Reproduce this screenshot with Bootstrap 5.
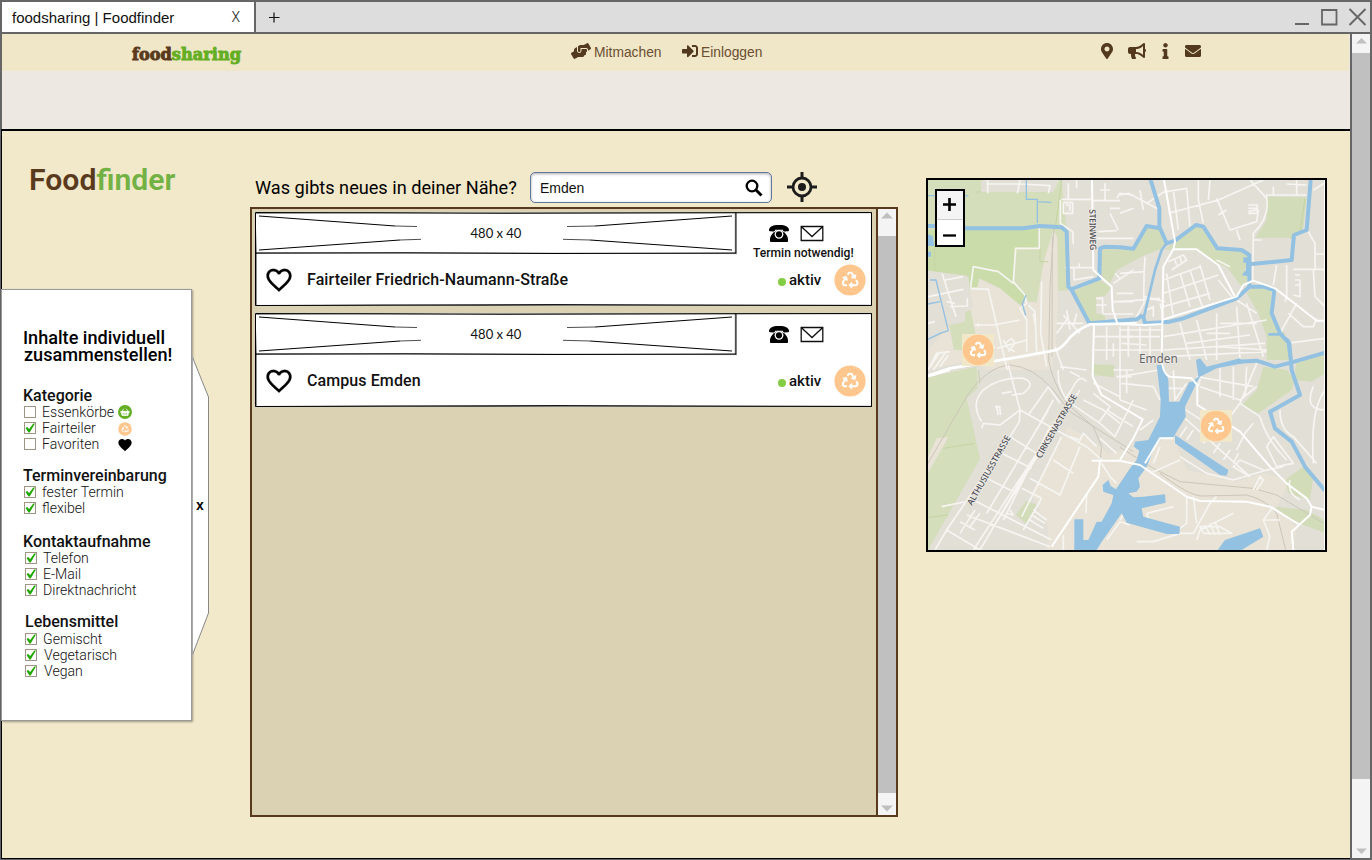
<!DOCTYPE html>
<html lang="de">
<head>
<meta charset="utf-8">
<title>foodsharing | Foodfinder</title>
<link rel="stylesheet" href="https://cdn.jsdelivr.net/npm/bootstrap@5.3.0/dist/css/bootstrap.min.css">
<style>
body{margin:0;font-family:Roboto,"Liberation Sans",sans-serif;color:#111;overflow:hidden;background:#f2e8ca}
svg{display:block;flex:none}
.window{width:1372px;height:860px;border:2px solid #666}
.tabstrip{height:32px;background:#ddd;border-bottom:2px solid #666;font:15px/30px "Liberation Sans",sans-serif}
.tab{width:254px;background:#fff;border-right:2px solid #666;padding:1px 14px 0 10px}
.tab .tab-x{font:300 14px/29px Roboto,sans-serif}
.plus{margin-left:8px}
.page{width:1348px}
.topnav{height:37px;background:#f0e6c8;font:13.8px/37px "Liberation Sans",sans-serif;color:#6b4f30;border-right:1px solid #ece8e1}
.band{height:58px;background:#ede9e2}
.content{border:solid #000;border-width:2px 0 1px 1px;margin:0 0 -1px -1px;background:#f2e8ca;z-index:1}
.vbar{width:20px;border-left:2px solid #666;background:#f4f4f4}
.thumb{background:#c0c0c0}
.leftcol{width:248px;padding-top:31px}
.brand-title{font-size:30.2px;line-height:36px;font-weight:600;color:#5a3a1c;padding-left:27px;margin:0}
.brand-title span{color:#72b244}
.filters{width:191px;height:432px;margin:91px 0 0 -1px;background:#fff;border:1px solid #999;box-shadow:1px 1px 2px rgba(0,0,0,.35);padding:39px 0 0 21px}
.filters h2{font-size:18.1px;line-height:17px;font-weight:500;margin:0 0 25px;color:#000;white-space:nowrap}
.filters h2 span{display:block;height:17px}
.filters h3{font-size:16px;line-height:16px;font-weight:500;margin:0;color:#111}
.opt{height:16px;line-height:16px;font-size:14.1px;font-weight:300;color:#111}
.tick{width:12px;height:12px;border:1px solid #a09484;background:#fff;margin-right:6px;margin-left:1px}
.inset1{padding-left:1px}
.midcol{width:648px;padding-top:41px}
.searchrow{height:31px;margin-bottom:4px}
.searchlabel{font-size:18.15px;width:280px;padding-left:5px;line-height:31px;color:#000}
.searchbox{width:242px;border:1px solid #5f78a0;border-radius:5px;background:#fff;box-shadow:inset 0 1px 3px #aaa;font:14px/30px "Liberation Sans",sans-serif;padding:0 8px 0 9px}
.listbox{height:610px;border:2px solid #5a3a1c;background:#dbd2b4}
.items{width:624px;padding:3px 0 0 3px;gap:7px}
.item{width:617px;height:94px;background:#fff}
.ph{width:482px;height:42px;font:13px/43px Lato,sans-serif;text-align:center}
.contact{padding:13px 0 0 16px}
.contact-icons{padding-left:16px;gap:11px}
.termin{font-size:12.1px;line-height:14px;font-weight:500;margin-top:4px}
.lower{height:52px;padding-left:9px}
.lower .ttl{width:484px;flex:none;padding-left:13px;font-size:16px;letter-spacing:.09px;line-height:20px;font-weight:500;color:#111}
.dot{width:8px;height:8px;flex:none;border-radius:50%;background:#84cc44;margin:4px 3px 0 0}
.akt{width:45px;flex:none;font-size:15px;font-weight:500;color:#111}
.listbar{width:20px;border-left:2px solid #5a3a1c;background:#f4f4f4}
.mapbox{width:401px;height:374px;border:2px solid #000;margin:47px 0 0 28px;overflow:hidden}
.zoomer{left:7px;top:9px;width:30px;height:58px;border:2px solid #000;background:#fff}
.zoomer div{height:26px}
.zoomer div:first-child{background:#f4f4f4;height:29px;border-bottom:1px solid #ccc}
</style>
</head>
<body>
<svg width="0" height="0" style="position:absolute">
<defs>
<symbol id="recycle" viewBox="0 0 512 512"><path d="M184.561 261.903c3.232 13.997-12.123 24.635-24.068 17.168l-40.736-25.455-50.867 81.402C55.606 356.273 70.96 384 96.012 384H148c6.627 0 12 5.373 12 12v40c0 6.627-5.373 12-12 12H96.115c-75.334 0-121.302-83.048-81.408-146.88l50.822-81.388-40.725-25.448c-12.081-7.547-8.966-25.961 4.879-29.158l110.237-25.45c8.611-1.988 17.201 3.381 19.189 11.99l25.452 110.237zm98.561-182.915l41.289 66.076-40.74 25.457c-12.051 7.528-9 25.953 4.879 29.158l110.237 25.45c8.672 1.999 17.215-3.438 19.189-11.99l25.45-110.237c3.197-13.844-11.99-24.719-24.068-17.168l-40.687 25.424-41.263-66.082c-37.521-60.033-125.209-60.171-162.816 0l-17.963 28.766c-3.51 5.62-1.8 13.021 3.82 16.533l33.919 21.195c5.62 3.512 13.024 1.803 16.536-3.817l17.961-28.743c12.712-20.341 41.973-19.676 54.257-.022zM497.288 301.12l-27.515-44.065c-3.511-5.623-10.916-7.334-16.538-3.821l-33.861 21.159c-5.62 3.512-7.33 10.915-3.818 16.536l27.564 44.112c13.257 21.211-2.057 48.96-27.136 48.96H320V336.02c0-14.213-17.242-21.383-27.313-11.313l-80 79.981c-6.249 6.248-6.249 16.379 0 22.627l80 79.989C302.689 517.308 320 510.3 320 495.989V448h95.88c75.274 0 121.335-82.997 81.408-146.88z" fill="#fff"/></symbol>
<symbol id="fair" viewBox="0 0 32 32"><circle cx="16" cy="16" r="15.6" fill="#ffc68d"/><use href="#recycle" x="7.7" y="7.4" width="17" height="17"/></symbol>
<symbol id="heart" viewBox="0 0 24 24"><path d="M12 21.35l-1.45-1.32C5.4 15.36 2 12.28 2 8.500 2 5.420 4.420 3 7.500 3c1.740 0 3.410.810 4.500 2.090C13.090 3.810 14.760 3 16.500 3 19.580 3 22 5.420 22 8.500c0 3.780-3.400 6.860-8.550 11.540L12 21.350z"/></symbol>
<symbol id="heart-o" viewBox="0 0 24 24"><path d="M16.500 3c-1.740 0-3.410.810-4.500 2.090C10.910 3.810 9.240 3 7.500 3 4.420 3 2 5.420 2 8.500c0 3.780 3.400 6.860 8.550 11.540L12 21.350l1.450-1.320C18.600 15.360 22 12.280 22 8.500 22 5.420 19.580 3 16.500 3zm-4.400 15.550l-.100.100-.100-.100C7.140 14.240 4 11.390 4 8.500 4 6.500 5.500 5 7.500 5c1.540 0 3.040.990 3.570 2.360h1.870C13.460 5.990 14.960 5 16.500 5c2 0 3.500 1.500 3.500 3.500 0 2.890-3.140 5.740-7.900 10.050z" stroke="#111" stroke-width=".2"/></symbol>
<symbol id="phone" viewBox="0 0 20 17"><path d="M1 6.300C-.3 6-.2 4.500.5 3.300 2.500.2 6 0 10 0s7.500.2 9.500 3.300c.7 1.200.8 2.700-.5 3l-3.700.2c-1 0-1.300-.6-1.300-1.700H6c0 1.100-.3 1.700-1.300 1.700zM4.700 7.200c1.300 0 1.900-.6 2.100-1.500h6.400c.2.900.8 1.500 2.100 1.500C17.500 9.500 19 12 19 14v1.800c0 .8-.3 1.200-1.200 1.200H2.200C1.300 17 1 16.600 1 15.800V14c0-2 1.500-4.500 3.700-6.800z" fill="#000"/><circle cx="10" cy="9.300" r="4.400" fill="#fff"/><circle cx="10" cy="9.300" r="3.100" fill="#000"/></symbol>
<symbol id="mail-o" viewBox="0 0 24 17"><path d="M1.200 1.500h21.600v14H1.200zM1.200 1.500 12 11.500 22.800 1.500" fill="none" stroke="#111" stroke-width="1.300"/></symbol>
<symbol id="check" viewBox="0 0 10 10"><path d="M.5 5 2.200 4 4.200 6.100 8.300.4H10L4.700 9.600H3.500z" fill="#22a800"/></symbol>
<symbol id="sketch" viewBox="0 0 617 94"><g fill="none" stroke="#000" stroke-width="1">
<path d="M.5.500 250 1.300 616.500.500V93.500L300 92.600.500 93.500z"/><path d="M.5 1.300 200 0 617 .700M1.300 93V40L0 1" opacity=".55"/><path d="M0 93.800 130 93.200 320 93.800 617 93.300" opacity=".6"/>
<path d="M.5 41.200 150 40.800 300 41.500 481 41V1"/><path d="M480.300 0V41.500M.500 40.700 482 41.600" opacity=".5"/></g>
<g fill="none" stroke="#000"><path d="M4 4 140 14 M4 38 145 28M477 4 340 14M477 38 335 28"/><path d="M140 14 162 14.500M145 28 166 27.300M340 14 312 14.500M335 28 308 27.300" stroke-width=".7"/></g></symbol>
</defs></svg>

<div class="window d-flex flex-column">
 <div class="tabstrip d-flex align-items-stretch">
  <div class="tab d-flex justify-content-between"><span>foodsharing | Foodfinder</span><span class="tab-x">X</span></div>
  <svg class="plus" width="22" height="30"><path d="M5 15.500h10.500M10 10.500v10" stroke="#111" stroke-width="1.200"/></svg>
  <svg class="ms-auto" width="76" height="30" fill="none" stroke="#666"><path d="M1 22h14M55.500 7l16 16M71.500 7l-16 16" stroke-width="1.900"/><path d="M28 8h14.500v14.500H28z" stroke-width="1.800"/></svg>
 </div>
 <div class="d-flex flex-grow-1">
  <div class="page d-flex flex-column">
   <nav class="topnav d-flex align-items-center">
    <svg width="114" height="30" style="margin-left:128px"><text x="2" y="21.800" font-family="DejaVu Serif Condensed,DejaVu Serif" font-weight="700" font-size="17.500" textLength="109" lengthAdjust="spacingAndGlyphs" fill="#5a3a1c" stroke="#5a3a1c" stroke-width=".9">food<tspan fill="#64ae24" stroke="#64ae24">sharing</tspan></text></svg>
    <svg width="20" height="16" viewBox="0 0 640 512" fill="#533a1e" class="mb-1" style="margin-left:327px"><path d="M488 192H336v56c0 39.700-32.300 72-72 72s-72-32.300-72-72V126.400l-64.900 39C107.800 176.900 96 197.800 96 220.200v47.300l-80 46.200C.7 322.500-4.600 342.100 4.300 357.400l80 138.600c8.800 15.300 28.400 20.500 43.700 11.700L231.400 448H368c35.300 0 64-28.700 64-64h16c17.700 0 32-14.300 32-32v-64h8c13.300 0 24-10.700 24-24v-48c0-13.300-10.700-24-24-24zm147.700-37.400L555.700 16C546.900.7 527.300-4.500 512 4.300L408.600 64H306.400c-12 0-23.700 3.400-33.900 9.700L239 94.600c-9.400 5.800-15 16.100-15 27.100V248c0 22.100 17.900 40 40 40s40-17.900 40-40v-88h184c30.900 0 56 25.100 56 56v28.500l80-46.200c15.300-8.900 20.500-28.400 11.700-43.700z"/></svg>
    <span style="margin-left:3px;width:88px">Mitmachen</span>
    <svg width="16" height="16" viewBox="0 0 512 512" fill="#533a1e" class="mb-1"><path d="M416 448h-84c-6.600 0-12-5.400-12-12v-40c0-6.600 5.400-12 12-12h84c17.700 0 32-14.300 32-32V160c0-17.700-14.300-32-32-32h-84c-6.600 0-12-5.400-12-12V76c0-6.600 5.400-12 12-12h84c53 0 96 43 96 96v192c0 53-43 96-96 96zm-47-201L201 79c-15-15-41-4.500-41 17v96H24c-13.300 0-24 10.700-24 24v96c0 13.300 10.700 24 24 24h136v96c0 21.500 26 32 41 17l168-168c9.300-9.400 9.300-24.600 0-34z"/></svg>
    <span style="margin-left:3px;width:400px">Einloggen</span>
    <svg width="12" height="16" viewBox="0 0 384 512" fill="#533a1e" class="mb-1"><path d="M172.268 501.670C26.970 291.031 0 269.413 0 192 0 85.961 85.961 0 192 0s192 85.961 192 192c0 77.413-26.970 99.031-172.268 309.670-9.535 13.774-29.930 13.773-39.464 0zM192 272c44.183 0 80-35.817 80-80s-35.817-80-80-80-80 35.817-80 80 35.817 80 80 80z"/></svg>
    <svg width="18" height="16" viewBox="0 0 576 512" fill="#533a1e" class="mb-1" style="margin-left:15px"><path d="M576 240c0-23.630-12.950-44.040-32-55.120V32.010C544 23.260 537.020 0 512 0c-7.120 0-14.190 2.380-19.980 7.020l-85.030 68.030C364.280 109.190 310.660 128 256 128H64c-35.350 0-64 28.650-64 64v96c0 35.350 28.650 64 64 64h33.700c-1.390 10.480-2.180 21.140-2.180 32 0 39.770 9.260 77.350 25.560 110.940 5.190 10.690 16.520 17.060 28.400 17.060h74.280c26.050 0 41.690-29.840 25.900-50.560-16.400-21.520-26.150-48.360-26.150-77.440 0-11.110 1.620-21.790 4.410-32H256c54.660 0 108.280 18.810 150.980 52.950l85.030 68.030a32.023 32.023 0 0 0 19.980 7.020c24.920 0 32-22.780 32-32V295.130C563.050 284.040 576 263.630 576 240zm-96 141.420l-33.050-26.440C392.950 311.780 325.120 288 256 288v-96c69.120 0 136.950-23.780 190.950-66.980L480 98.580v282.840z"/></svg>
    <svg width="7" height="16" viewBox="0 0 192 512" fill="#533a1e" class="mb-1" style="margin-left:16px"><path d="M20 424.229h20V279.771H20c-11.046 0-20-8.954-20-20V212c0-11.046 8.954-20 20-20h112c11.046 0 20 8.954 20 20v212.229h20c11.046 0 20 8.954 20 20V492c0 11.046-8.954 20-20 20H20c-11.046 0-20-8.954-20-20v-47.771c0-11.046 8.954-20 20-20zM96 0C56.235 0 24 32.235 24 72s32.235 72 72 72 72-32.235 72-72S135.764 0 96 0z"/></svg>
    <svg width="16" height="16" viewBox="0 0 512 512" fill="#533a1e" class="mb-1" style="margin-left:16px"><path d="M502.300 190.800c3.900-3.100 9.700-.2 9.700 4.700V400c0 26.500-21.500 48-48 48H48c-26.500 0-48-21.500-48-48V195.600c0-5 5.700-7.800 9.700-4.700 22.400 17.400 52.100 39.500 154.100 113.600 21.100 15.400 56.700 47.800 92.200 47.600 35.700.3 72-32.800 92.300-47.600 102-74.100 131.600-96.300 154-113.700zM256 320c23.200.4 56.600-29.200 73.400-41.400 132.700-96.300 142.800-104.700 173.400-128.700 5.800-4.500 9.200-11.500 9.200-18.900v-19c0-26.500-21.500-48-48-48H48c-26.500 0-48 21.500-48 48v19c0 7.400 3.400 14.300 9.200 18.900 30.600 23.900 40.700 32.400 173.400 128.700 16.800 12.200 50.200 41.800 73.400 41.400z"/></svg>
   </nav>
   <div class="band"></div>
   <main class="content d-flex flex-grow-1 align-items-start position-relative">
    <div class="leftcol">
     <h1 class="brand-title">Food<span>finder</span></h1>
     <div class="d-flex align-items-start">
      <aside class="filters flex-shrink-0">
       <h2><span>Inhalte individuell</span><span class="inset1">zusammenstellen!</span></h2>
       <section style="height:80px"><h3>Kategorie</h3>
        <div class="opt d-flex align-items-center"><i class="tick"></i><span style="width:76px">Essenkörbe</span><svg width="14" height="14" viewBox="0 0 14 14"><circle cx="7" cy="7" r="7" fill="#64ae24"/><path d="M2.800 6.300h8.400v1.200h-.5l-.8 3H4.100l-.8-3h-.5zM4 6.300 5.800 3.700M10 6.300 8.200 3.700" fill="#fff" stroke="#fff" stroke-width=".7"/><path d="M5.300 8v1.800M7 8v1.800M8.700 8v1.800" stroke="#64ae24" stroke-width=".6"/></svg></div>
        <div class="opt d-flex align-items-center"><i class="tick"><svg width="10" height="10"><use href="#check"/></svg></i><span style="width:76px">Fairteiler</span><svg style="margin-top:2px" width="14" height="14"><use href="#fair"/></svg></div>
        <div class="opt d-flex align-items-center"><i class="tick"></i><span style="width:75px">Favoriten</span><svg style="margin-top:2px" width="16" height="16"><use href="#heart"/></svg></div>
       </section>
       <section style="height:66px"><h3>Terminvereinbarung</h3>
        <div class="opt d-flex align-items-center"><i class="tick"><svg width="10" height="10"><use href="#check"/></svg></i>fester Termin</div>
        <div class="opt d-flex align-items-center"><i class="tick"><svg width="10" height="10"><use href="#check"/></svg></i>flexibel</div>
       </section>
       <section style="height:80px"><h3>Kontaktaufnahme</h3>
        <div class="inset1">
        <div class="opt d-flex align-items-center"><i class="tick"><svg width="10" height="10"><use href="#check"/></svg></i>Telefon</div>
        <div class="opt d-flex align-items-center"><i class="tick"><svg width="10" height="10"><use href="#check"/></svg></i>E-Mail</div>
        <div class="opt d-flex align-items-center"><i class="tick"><svg width="10" height="10"><use href="#check"/></svg></i>Direktnachricht</div></div>
       </section>
       <section><h3 style="padding-left:2px;margin-bottom:1px">Lebensmittel</h3>
        <div class="inset1">
        <div class="opt d-flex align-items-center"><i class="tick"><svg width="10" height="10"><use href="#check"/></svg></i>Gemischt</div>
        <div class="opt d-flex align-items-center"><i class="tick"><svg width="10" height="10"><use href="#check"/></svg></i><span class="inset1">Vegetarisch</span></div>
        <div class="opt d-flex align-items-center"><i class="tick"><svg width="10" height="10"><use href="#check"/></svg></i><span class="inset1">Vegan</span></div></div>
       </section>
      </aside>
      <svg width="18" height="301" style="margin-top:158px"><path d="M0 0 16.500 41V257L0 300z" fill="#fff" stroke="#888"/><path d="M.500 0V300" stroke="#aaa"/><text x="4" y="154" font-size="15.500" font-weight="500" fill="#000">x</text></svg>
     </div>
    </div>
    <div class="midcol">
     <div class="searchrow d-flex">
      <div class="searchlabel text-nowrap">Was gibts neues in deiner Nähe?</div>
      <div class="searchbox d-flex align-items-center justify-content-between"><span>Emden</span><svg width="18" height="18" fill="none" stroke="#000"><circle cx="7" cy="7" r="5.300" stroke-width="2.300"/><path d="M10.800 10.800 16.500 16.500" stroke-width="3"/></svg></div>
      <svg width="30" height="30" style="margin-left:15px" fill="none" stroke="#1c1c1c"><circle cx="15" cy="15" r="9" stroke-width="2.800"/><path d="M15 0v7M15 23v7M0 15h7M23 15h7" stroke-width="3"/><circle cx="15" cy="15" r="4" fill="#1c1c1c" stroke="none"/></svg>
     </div>
     <div class="listbox d-flex">
      <div class="items d-flex flex-column">
       <article class="item position-relative">
        <svg class="position-absolute top-0 start-0" width="617" height="94"><use href="#sketch"/></svg>
        <div class="d-flex" style="height:42px"><div class="ph position-relative">480 x 40</div>
         <div class="contact"><div class="contact-icons d-flex"><svg width="20" height="17"><use href="#phone"/></svg><svg width="24" height="17"><use href="#mail-o"/></svg></div><div class="text-nowrap termin">Termin notwendig!</div></div></div>
        <div class="d-flex align-items-center lower"><svg width="30" height="30"><use href="#heart-o"/></svg><span class="ttl">Fairteiler Friedrich-Naumann-Straße</span><i class="dot"></i><span class="akt">aktiv</span><svg width="32" height="32"><use href="#fair"/></svg></div>
       </article>
       <article class="item position-relative">
        <svg class="position-absolute top-0 start-0" width="617" height="94"><use href="#sketch"/></svg>
        <div class="d-flex" style="height:42px"><div class="ph position-relative">480 x 40</div>
         <div class="contact"><div class="contact-icons d-flex"><svg width="20" height="17"><use href="#phone"/></svg><svg width="24" height="17"><use href="#mail-o"/></svg></div></div></div>
        <div class="d-flex align-items-center lower"><svg width="30" height="30"><use href="#heart-o"/></svg><span class="ttl">Campus Emden</span><i class="dot"></i><span class="akt">aktiv</span><svg width="32" height="32"><use href="#fair"/></svg></div>
       </article>
      </div>
      <div class="listbar d-flex flex-column"><svg width="18" height="27"><path d="M3 9.500h12L9 3.500z" fill="#c0c0c0"/></svg><div class="thumb flex-grow-1"></div><svg width="18" height="22"><path d="M3 12.500h12L9 18.500z" fill="#c0c0c0"/></svg></div>
     </div>
    </div>
    <div class="mapbox position-relative">
<svg width="397" height="370" viewBox="24 30 1191 1110">
<rect x="24" y="30" width="1191" height="1110" fill="#e2dfd7"/>
<!-- industrial ground -->
<g fill="#e8e3d6"><path d="M400 180 412 200 415 362 408 530 395 600H200L150 570 24 600V540L88 465 100 540H160L168 500 135 420 160 415 148 355 178 350 240 355 303 407 325 395 350 397 372 270z"/>
<path d="M445 770 530 820 620 900 640 1140H380L385 1070 335 970z"/>
<path d="M570 850 720 810 760 800 800 900 950 935 1030 910 1110 930 1070 1010 1130 1070 1120 1140H540z"/></g>
<!-- green areas -->
<g fill="#d4deba"><path d="M24 30H183V66H400L418 30H425L440 180 442 362H414L412 200 400 180 372 270 350 397 325 395 280 340 24 300z"/>
<path d="M88 465 133 455V425L152 420 168 500 160 540H102z"/>
<path d="M24 622 170 590 173 655 140 685 180 867 24 1140z"/></g>
<g fill="#cbdcab"><path d="M24 180 358 178 355 235 287 232 280 340 235 305 160 290 148 352 140 316 24 302z"/><path d="M160 290 235 305 290 350 320 375 303 407 240 355 178 325 172 352 148 355z"/></g>
<path d="M180 328 240 358 300 408 330 410 260 530 180 540 172 470 160 415 150 356H172z" fill="#e8e3d6"/>
<path d="M24 304 145 320 158 415 135 425V455L88 465 24 540z" fill="#e2dfd7"/>
<g fill="#e8e3d6"><path d="M50 805 85 802 24 910V860z"/></g>
<g fill="#d2dcb9"><path d="M540 238H640L680 172H718L740 220 730 235 675 255 590 300 570 340 545 320z"/>
<path d="M462 362 540 330 575 352 555 378 530 380 528 430 555 435V458H510L490 420z"/>
<path d="M768 212 825 168 855 175 885 230 970 240 985 262 975 300 985 340 965 350 920 290 890 280 830 242 735 238z"/>
<path d="M1038 80 1160 82 1150 175 1120 203H1005L1040 150z"/>
<path d="M980 370 1000 350 1055 355 1050 430 1065 470 1095 490 1110 570H1040V500L1015 430z"/>
<path d="M1125 600 1130 578 1215 550V610L1175 635 1130 630z"/>
<path d="M1030 590 1100 600 1125 630 1115 660 1015 730 965 705 1010 660z"/>
<path d="M1150 890 1180 920 1170 990 1105 970 1095 930z"/><path d="M1065 1010 1160 1020 1215 1050V1088L1150 1065 1100 1040z"/>
<path d="M320 992 350 1005 318 1060 287 1035z"/><path d="M518 582 583 585V622L520 615z"/></g>
<path d="M183 66H170M44 210V300M175 600 180 640M425 30 405 180M70 835 165 820M24 1042 85 1035M360 180V275L385 275M1155 85 1140 190 1110 205" stroke="#c5d3a2" stroke-width="3" fill="none"/>
<!-- railways -->
<g fill="none" stroke="#cbc6ba" stroke-width="3"><path d="M402 170 390 350 386 570Q395 630 440 700L520 770 545 830 540 870M397 200 396 560M24 880 140 680Q200 590 270 585 340 590 400 660L450 725 640 845M600 832 700 895 780 935 1000 955 1070 975 1215 1062M720 910Q810 980 850 978L980 975Q1040 990 1070 1030L1097 1140"/></g>
<!-- side streets -->
<g fill="none" stroke="#f6f5f2" stroke-width="5" stroke-linejoin="round">
<path d="M203 30V70M203 42H300L390 47 385 70M292 70 300 30M358 175V235H287L280 335 315 375 320 400 300 415 320 450V545M152 352 160 290 235 305 280 340M152 355 205 358 245 530 262 600M163 465H220L300 450M175 460V470M232 535 320 510M66 310 108 440M24 380 130 358M90 410 142 408V385M75 330 130 320M80 395 105 400M24 460 45 455M325 405 345 425 350 545M365 335 362 490 380 590M340 430 345 460"/>
<path d="M425 88H516M445 40V88M470 30V55M421 90V160L458 185 460 222M430 98H458V130H430zM438 105H450V122M516 92H600M555 40V90M540 60H570M590 85 600 70 640 75M535 185 590 182M520 205H640M570 115H600M570 130 595 180M435 293H520M462 295V330L520 320M478 280V293M580 340 640 300M585 310 600 325M590 370H640M528 385H548V430M528 405H560M548 432H640M580 395H640M430 435 480 490M410 460H490M440 420 450 480M470 430 460 470M410 490 440 450M405 530 430 600M560 470V570M600 470V600M525 500H640M525 540H620M625 470V560M580 520V560"/>
<path d="M250 510 265 535 285 545M255 520 275 505 285 520 265 545M24 600 50 550 90 545M30 590 60 545M40 600 75 550M60 590 85 555M215 540 225 530"/>
<path d="M740 65 800 55 810 170M760 60 775 180M835 30V90L850 160M870 30 865 90M745 130 895 90 1030 30M890 85 930 180 1010 155 1015 120M895 135 920 120M950 180 960 210M985 105H1012V130H985M985 115H1010M985 125 1010 120M990 30 1040 85Q1050 140 1000 190L998 330M1040 85V75H1160M1060 50V75M1100 42 1160 45M1130 30V75M1000 210H1025M1215 38 1180 60M1165 185 1185 220V300M1185 252H1215M1120 298H1215M1180 300 1185 380 1215 410M1100 285V380L1095 395M1070 285 1060 345M1125 315H1140M1125 330H1140V380L1120 375M1125 345H1140"/>
<path d="M740 60 680 100M660 60 670 120M600 75 625 70 720 120M640 115 600 130M675 260Q670 330 672 400 650 440 635 465M600 395 720 385M600 310 675 305M672 380 735 395M745 275 790 255 800 270 755 300M765 270 770 285M780 262 785 278M730 330 840 290M730 370 895 315M730 410 870 370M780 310 810 410M810 300 850 420M840 285 870 390M740 310 760 440M930 290 890 270M895 330 935 380"/>
<path d="M730 500 1040 450M730 540 1035 520M740 560 1040 545M780 460 810 570M830 450 860 570M890 430V570M950 410 960 570M980 400 1030 560M860 490H930M800 520 990 495M900 460H1010M890 530 1040 540M950 390 1010 430M1130 400 1080 490M1105 430 1150 470 1180 470 1190 445M1100 520 1215 505M720 400 730 440M680 420 700 410V440M600 480H725M610 500H720M625 470V520M660 470V570M690 470V560M600 540H725M605 520 680 525"/>
<path d="M185 775 190 760 240 765 300 720 265 585M185 755Q150 700 190 660 240 620 310 625 350 640 310 670L275 675M245 670 275 665M225 710H242M230 712 235 735M238 710 242 735M300 720 500 830 545 870M300 720 298 755 270 800 80 1080 45 1140M80 1080 180 1140M120 1055 165 1080M140 1035 390 1130M65 1010 160 990 395 1110M200 925 290 970M245 850 335 895M270 800 350 850M325 735 385 650 420 700M360 760 400 690M420 730 180 1140M390 770 250 1050M385 720 200 1030M350 850 160 1140M400 780 215 1080M425 800 305 1040M400 870 460 910M480 830 420 975 330 925M305 955 365 985M365 985 310 1080M270 1020 280 1035 260 1030M340 1020 380 1050M335 1035 375 1060M330 1050 370 1075M430 1095V1140M165 1020 120 1090M180 1030 150 1070M415 600Q410 650 445 695L540 760 585 800 640 690M500 635Q480 610 460 650L435 690M450 605 480 620M520 640 600 680M490 690 550 720 600 760M535 760 570 710 520 670M560 720 640 770M480 660 440 720M475 820 490 790 530 830M450 800 480 810M540 805 590 850M545 880 570 920 590 940M500 970 498 1030M560 1110 600 1055 630 1065M420 590 500 600M580 600H640M590 620H635M600 590V690M620 600V670"/>
<path d="M600 620 715 600M605 640 700 650 720 690M600 690 680 720M760 600 765 690 800 640M745 655H790M700 750 660 780M830 620 1000 650M840 650 960 690 1010 650M850 590 835 650M900 590V680M940 590V690M980 590 975 680M1010 580 960 700M795 745 990 920M790 715 860 760M780 765 760 790M800 770 780 800M820 780 800 810M870 800 850 820M900 820 880 850M930 840 910 870M955 850 940 880M780 860 860 910 940 930 1040 900 1090 890M990 920 940 890 960 870 1030 900M1000 960 1020 920 1030 930 1010 960M930 740 960 700 1020 740M1040 830 1070 890 1120 880 1060 800 1040 830M1020 740Q1040 810 1100 870M1080 720Q1080 780 1120 800L1190 880M1180 650Q1150 720 1215 720M1215 660Q1170 720 1180 880M950 840 975 790 1000 760"/>
<path d="M650 1115H700L780 1090 820 1090 870 1000 890 980M800 980V1060L760 1090M820 980 830 1060M830 1110 840 1080 940 1030M840 1070H900L935 1090H850zM855 1065 870 1095M870 1060 885 1095M885 1055 900 1095M1060 1010 1030 1050 1050 1100 1040 1140M1080 1050 1030 1050M680 1030 760 1010M680 1030 690 1060M600 1050 620 1020M1110 930Q1100 970 1140 990M690 910 780 870M700 880 720 830"/></g>
<!-- canals and harbour -->
<g fill="none" stroke="#93c1e2" stroke-width="12" stroke-linejoin="round">
<path d="M24 168H130L135 175H310L360 168 425 172 440 185 445 350 455 360 508 460 600 452 650 448 668 435M455 357 538 325 540 235 555 230 600 232 640 236 680 168 720 175M692 30 718 115V170L740 220 765 212 828 165 850 170 892 235 965 240 988 255V350L950 385 790 445 750 455 675 460 668 435M988 283 1115 270 1122 195 1160 180 1172 30M988 350 1030 350 1063 360 1055 430 1080 490 1108 520 1115 600 1140 675 1050 725 1065 775 1115 815 1155 890 1215 962M1115 577 1215 548M1115 577 1065 590 1010 572 950 575"/>
<path d="M672 440 705 300 725 240 740 220M1045 493H1090" stroke-width="8"/><path d="M319 30V88H352V160M350 95 394 97M24 77H145M30 330H48L85 482 60 490 24 508M24 402 60 395M318 375 307 402 317 436" stroke-width="4"/></g>
<g fill="#93c1e2"><path d="M24 193 38 198 43 228 24 228zM24 245H33V260H24zM970 262H990V320L965 315 978 300V278H970z"/>
<path d="M828 570 840 565 860 590 960 565 970 580 890 595 840 620 828 640 810 640 835 620z"/><path d="M1098 500 1110 510 1118 570 1105 560z"/>
<path transform="translate(600 570)" d="M110 15H130L145 60 147 125H178L208 65 230 68 195 140 197 170 160 232 125 235 100 270 80 320 55 355 60 380 50 395 25 400 40 412 70 410 135 403 137 428 65 445 70 470 180 500 178 522 140 522 20 488 5 460-55 545-70 570H-137V478H-110V540H-95L-70 485H-55L-25 430-20 405-50 395-52 375-35 360-28 378-12 388 30 325 50 300 58 272 42 260 45 245 85 240 120 170 122 120z"/>
<path d="M765 795 925 900 920 917 900 915 765 820zM893 1140 915 1110 1020 1075 1030 1100 965 1140z"/></g>
<!-- main roads -->
<g fill="none" stroke="#fff" stroke-width="8" stroke-linejoin="round"><path d="M650 460 510 463Q460 485 440 515 420 540 400 542L290 562 90 595 24 617"/><path d="M516 30 520 300 575 350 578 420 592 460M522 465 518 620 545 675 668 748 640 805 600 870M732 30 765 215 760 238 730 290 725 570Q730 615 750 620L815 625 832 645V705L960 785 1050 890 1100 940 1160 985 1175 1010 1215 1020M760 238H830L895 285 945 380M600 463 675 465 730 462M725 450 950 380 970 345 1000 332 1065 355 1130 405 1190 452H1215" stroke-width="6"/><path d="M1120 1140 1115 1085 1170 1035 1175 1010M515 872H600L660 885 800 980 840 993 980 995 1050 1010 1140 1065M540 870 535 920 395 1130M760 805H720L675 880M90 600 24 620" stroke-width="6"/></g>
<g font-family="Noto Sans" font-weight="500" fill="#4d4d55" stroke="#eceae4" stroke-width="5" paint-order="stroke" font-size="26"><text transform="translate(508 118) rotate(89)" textLength="123">STEINWEG</text><text transform="translate(362 867) rotate(-59.700)" textLength="218">CIRKSENASTRASSE</text><text transform="translate(156 1008) rotate(-60.300)" textLength="236">ALTHUSIUSSTRASSE</text><text x="657" y="579" font-size="37" textLength="116" lengthAdjust="spacingAndGlyphs" font-weight="400" fill="#66666a">Emden</text></g>
<path fill="#f1e7c9" d="M126 492H222V588H126zM840 720H936V815H840z"/>
<use href="#fair" x="127" y="493" width="94" height="94"/><use href="#fair" x="841" y="721" width="94" height="94"/>
<path d="M1213.500 30V1140" stroke="#fff" stroke-width="3"/>
</svg>
     <div class="zoomer position-absolute"><div><svg width="26" height="27"><path d="M6 13.500h13M12.500 7v13" stroke="#000" stroke-width="2.600"/></svg></div><div><svg width="26" height="26"><path d="M6 15.500h13" stroke="#000" stroke-width="2.300"/></svg></div></div>
    </div>
   </main>
  </div>
  <div class="vbar d-flex flex-column"><svg width="18" height="19"><path d="M4 9.500h11L9.500 4z" fill="#c0c0c0"/></svg><div class="thumb flex-grow-1"></div><svg width="18" height="79"><path d="M4 69.500h11L9.500 75z" fill="#c0c0c0"/></svg></div>
 </div>
</div>
<script src="https://cdn.jsdelivr.net/npm/bootstrap@5.3.0/dist/js/bootstrap.bundle.min.js"></script>
</body>
</html>
